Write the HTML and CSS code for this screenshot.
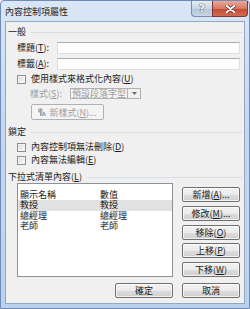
FILE: index.html
```html
<!DOCTYPE html>
<html lang="zh-Hant">
<head>
<meta charset="utf-8">
<link rel="stylesheet" href="styles.css">
</head>
<body>
<div class="window">
  <div class="titlebar">
    <span class="title">內容控制項屬性</span>
    <div class="caption-btns">
      <span class="cap help">?</span>
      <span class="cap close"><svg width="11" height="8" viewBox="0 0 11 8"><path d="M1.5 0.8 L9.5 7.2 M9.5 0.8 L1.5 7.2" stroke="#5a1d16" stroke-width="3.2" stroke-linecap="round"/><path d="M1.5 0.8 L9.5 7.2 M9.5 0.8 L1.5 7.2" stroke="#ffffff" stroke-width="2" stroke-linecap="round"/></svg></span>
    </div>
  </div>
  <div class="client">
    <div class="group-h g1"><span>一般</span><i class="rule"></i></div>
    <div class="field f-title"><span class="lbl">標題(<u>T</u>):</span><span class="input"></span></div>
    <div class="field f-tag"><span class="lbl">標籤(<u>A</u>):</span><span class="input"></span></div>
    <div class="check c-style"><span class="box"></span><span>使用樣式來格式化內容(<u>U</u>)</span></div>
    <div class="style-row"><span class="lbl dis">樣式(<u>S</u>):</span><span class="combo"><span class="combo-text">預設段落字型</span><span class="combo-arrow"><svg width="5" height="3" viewBox="0 0 5 3"><path d="M0 0 H5 L2.5 3 Z" fill="#6b6b6b"/></svg></span></span></div>
    <div class="btn disabled newstyle"><svg width="8" height="9" viewBox="0 0 8 9"><path d="M1 1 H4 V8 M2.5 1 V8" stroke="#9a9a9a" stroke-width="1" fill="none"/><path d="M1 1 C0 1 0 4 1 4 H2.5" fill="#b0b0b0" stroke="#9a9a9a" stroke-width="0.8"/><path d="M4.5 8 L6 4 L7.5 8 M5 6.8 H7" stroke="#8aa0c0" stroke-width="0.9" fill="none"/></svg><span>新樣式(<u>N</u>)...</span></div>
    <div class="group-h g2"><span>鎖定</span><i class="rule"></i></div>
    <div class="check c-del"><span class="box"></span><span>內容控制項無法刪除(<u>D</u>)</span></div>
    <div class="check c-edit"><span class="box"></span><span>內容無法編輯(<u>E</u>)</span></div>
    <div class="group-h g3"><span>下拉式清單內容(<u>L</u>)</span><i class="rule"></i></div>
    <div class="list-area">
      <div class="listbox">
        <div class="lrow head"><span class="c1">顯示名稱</span><span>數值</span></div>
        <div class="lrow sel"><span class="c1">教授</span><span>教授</span></div>
        <div class="lrow"><span class="c1">總經理</span><span>總經理</span></div>
        <div class="lrow"><span class="c1">老師</span><span>老師</span></div>
      </div>
      <div class="side-btns">
        <div class="btn">新增(<u>A</u>)...</div>
        <div class="btn">修改(<u>M</u>)...</div>
        <div class="btn">移除(<u>O</u>)</div>
        <div class="btn">上移(<u>P</u>)</div>
        <div class="btn">下移(<u>W</u>)</div>
      </div>
    </div>
    <div class="footer">
      <div class="btn fbtn">確定</div>
      <div class="btn fbtn">取消</div>
    </div>
  </div>
</div>
</body>
</html>
```
FILE: styles.css
```css
* { box-sizing: border-box; }
html, body { margin: 0; padding: 0; }
body {
  width: 250px;
  height: 309px;
  overflow: hidden;
  font-family: "Noto Sans CJK TC", "Liberation Sans", sans-serif;
  font-size: 9px;
  color: #1a1a1a;
  background: #fff;
}
u { text-decoration: underline; text-underline-offset: 1px; }

.window {
  width: 250px;
  height: 309px;
  border: 1px solid #6f8cb8;
  border-radius: 4px 4px 0 0;
  background: linear-gradient(to bottom, #dae6f5 0%, #c6d8f0 40%, #bcd1ec 100%);
  display: flex;
  flex-direction: column;
}

.titlebar {
  height: 20px;
  display: flex;
  justify-content: space-between;
  align-items: flex-start;
}
.title {
  margin-left: 4px;
  margin-top: 5px;
  line-height: 12px;
  color: #1e1e1e;
}
.caption-btns {
  display: flex;
  margin-right: 1px;
}
.cap {
  height: 16px;
  display: flex;
  align-items: center;
  justify-content: center;
  border: 1px solid #7a8ca6;
  border-top: none;
}
.help {
  width: 21px;
  border-radius: 0 0 0 4px;
  border-right: none;
  background: linear-gradient(to bottom, #e6edf6 0%, #c9d6e6 50%, #b5c5da 51%, #c7d5e6 100%);
  color: #fff;
  font-family: "DejaVu Sans", sans-serif;
  font-weight: bold;
  font-size: 11px;
  text-shadow: 0 0 1px #4d5a6c, 0 0 1px #4d5a6c, 0 0 1px #4d5a6c;
}
.close {
  width: 36px;
  border-radius: 0 0 4px 0;
  border-color: #7a3b33;
  background: linear-gradient(to bottom, #e9a99b 0%, #d67a66 50%, #c44a31 51%, #d26b52 100%);
}

.client {
  margin: 0 4px 4px 4px;
  height: 283px;
  border: 1px solid #93a6c2;
  background: #f0f0f0;
  display: flex;
  flex-direction: column;
}

.group-h {
  height: 10px;
  margin-left: 2px;
  margin-right: 2px;
  display: flex;
  align-items: center;
  line-height: 10px;
  white-space: nowrap;
}
.group-h .rule {
  flex: 1;
  height: 1px;
  margin-left: 5px;
  background: #d5dfe5;
}
.g1 { margin-top: 5px; }
.g2 { margin-top: 7px; }
.g3 { margin-top: 7px; }

.field {
  height: 12px;
  margin-left: 11px;
  margin-right: 4px;
  display: flex;
  align-items: center;
}
.f-title { margin-top: 5px; }
.f-tag { margin-top: 4px; }
.lbl {
  width: 40px;
  flex: none;
  line-height: 12px;
  white-space: nowrap;
}
.dis { color: #9c9c9c; }
.input {
  flex: 1;
  height: 12px;
  background: #fff;
  border: 1px solid #dbdfe6;
  border-top-color: #abadb3;
}

.check {
  height: 10px;
  margin-left: 11px;
  display: flex;
  align-items: center;
  gap: 5px;
  line-height: 10px;
  white-space: nowrap;
}
.c-style { margin-top: 4px; }
.c-del { margin-top: 5px; }
.c-edit { margin-top: 3px; }
.box {
  width: 9px;
  height: 9px;
  flex: none;
  border: 1px solid #8e8f8f;
  background: linear-gradient(135deg, #d6d6d6 0%, #eeeeee 60%, #fbfbfb 100%);
  box-shadow: inset 0 0 0 1px #f4f4f4;
}

.style-row {
  height: 11px;
  margin-top: 4px;
  margin-left: 24px;
  display: flex;
  align-items: center;
}
.combo {
  width: 71px;
  height: 11px;
  display: flex;
  border: 1px solid #adb2b5;
  background: #f4f4f4;
}
.combo-text {
  flex: 1;
  color: #9c9c9c;
  line-height: 9px;
  padding-left: 1px;
  white-space: nowrap;
}
.combo-arrow {
  width: 13px;
  border-left: 1px solid #adb2b5;
  display: flex;
  align-items: center;
  justify-content: center;
  background: #f0f0f0;
}

.btn {
  height: 15px;
  display: flex;
  align-items: center;
  justify-content: center;
  border: 1px solid #707070;
  border-radius: 2px;
  background: linear-gradient(to bottom, #f2f2f2 0%, #ebebeb 50%, #dddddd 51%, #cfcfcf 100%);
  box-shadow: inset 0 0 0 1px rgba(255,255,255,0.7);
  line-height: 13px;
  white-space: nowrap;
}
.btn.disabled {
  border-color: #adb2b5;
  background: #f4f4f4;
  box-shadow: none;
  color: #a0a0a0;
}
.newstyle {
  margin-top: 5px;
  margin-left: 25px;
  width: 73px;
  height: 16px;
  gap: 3px;
}

.list-area {
  margin-top: 1px;
  margin-left: 11px;
  margin-right: 4px;
  height: 94px;
  display: flex;
  gap: 9px;
}
.listbox {
  width: 156px;
  height: 94px;
  border: 1px solid #8e9297;
  background: #fff;
  padding-top: 5px;
}
.lrow {
  height: 10.5px;
  line-height: 10.5px;
  display: flex;
  padding-left: 2px;
  white-space: nowrap;
}
.lrow.head { height: 11px; line-height: 11px; }
.lrow.sel { background: #e1e1e1; }
.c1 { width: 80px; flex: none; }

.side-btns {
  flex: 1;
  display: flex;
  flex-direction: column;
  padding-top: 4px;
  gap: 3.75px;
}

.footer {
  margin-top: 6px;
  margin-right: 4px;
  display: flex;
  justify-content: flex-end;
  gap: 9px;
}
.fbtn { width: 58px; }
```
